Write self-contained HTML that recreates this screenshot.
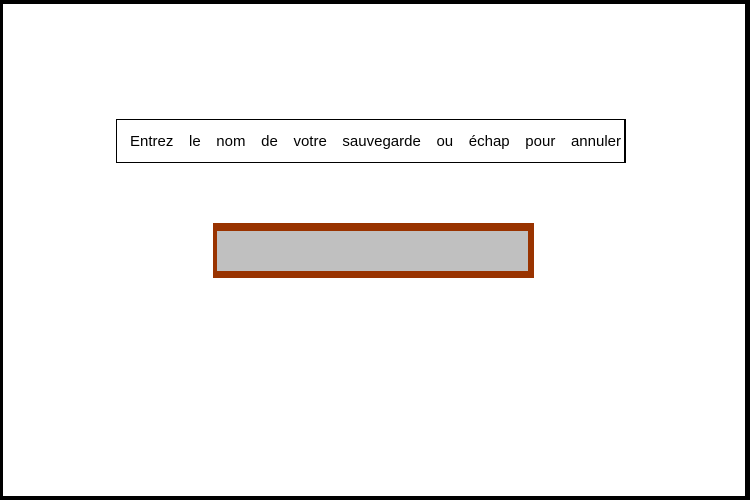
<!DOCTYPE html>
<html><head><meta charset="utf-8"><style>
html,body{margin:0;padding:0;}
body{width:750px;height:500px;position:relative;background:#fff;overflow:hidden;}
.frame{position:absolute;left:0;top:0;width:750px;height:500px;box-sizing:border-box;border-style:solid;border-color:#000;border-width:4px 5px 4px 3px;}
.msg{position:absolute;left:116px;top:119px;width:510px;height:44px;box-sizing:border-box;border:1px solid #000;border-right-width:2px;}
.msg div{position:absolute;left:13px;width:491px;top:13px;font-family:"Liberation Sans",sans-serif;font-size:15px;line-height:18px;text-align:justify;text-align-last:justify;color:#000;}
.inp{position:absolute;left:213px;top:223px;width:321px;height:55px;box-sizing:border-box;background:#c0c0c0;border-style:solid;border-color:#993300;border-width:8px 6px 7px 4px;}
</style></head><body>
<div class="frame"></div>
<div class="msg"><div>Entrez le nom de votre sauvegarde ou échap pour annuler</div></div>
<div class="inp"></div>
</body></html>
